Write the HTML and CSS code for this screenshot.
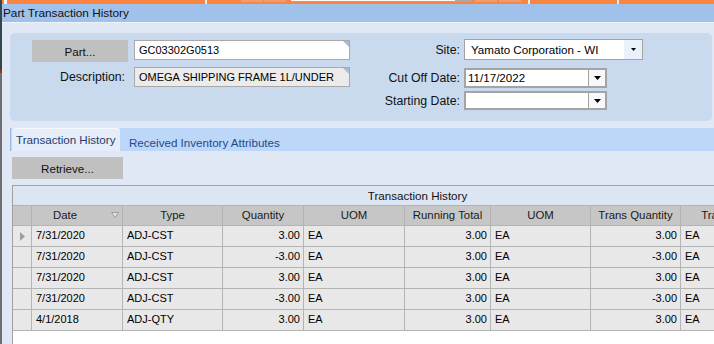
FILE: index.html
```html
<!DOCTYPE html>
<html lang="en">
<head>
    <meta charset="UTF-8">
    <meta name="viewport" content="width=device-width, initial-scale=1.0">
    <title>Part Transaction History</title>
    <link rel="stylesheet" href="styles.css">
</head>
<body>
    <div class="edge"></div>
    <div class="window">
        <!-- strip of the window behind -->
        <div class="taskstrip">
            <span class="ts ts-gap2"></span>
            <span class="ts ts-mark"></span>
            <span class="ts ts-gap198"></span>
            <span class="ts ts-sep"></span>
            <span class="ts ts-gap34"></span>
            <span class="ts ts-pale"></span>
            <span class="ts ts-gap1"></span>
            <span class="ts ts-pale"></span>
            <span class="ts ts-gap5"></span>
            <span class="ts ts-field"></span>
            <span class="ts ts-grip"></span>
            <span class="ts ts-gap3"></span>
            <span class="ts ts-pale"></span>
            <span class="ts ts-gap2"></span>
            <span class="ts ts-pale"></span>
            <span class="ts ts-gap7"></span>
            <span class="ts ts-sep"></span>
            <span class="ts ts-gap87"></span>
            <span class="ts ts-sep"></span>
        </div>

        <div class="titlebar">Part Transaction History</div>

        <div class="content">
            <div class="criteria">
                <div class="crit-left">
                    <div class="crit-row">
                        <button class="btn part-btn">Part...</button>
                        <div class="field folded">GC03302G0513</div>
                    </div>
                    <div class="crit-row">
                        <label class="crit-label">Description:</label>
                        <div class="field folded readonly">OMEGA SHIPPING FRAME 1L/UNDER</div>
                    </div>
                </div>
                <div class="crit-right">
                    <div class="crit-row site-row">
                        <label class="crit-label wide">Site:</label>
                        <div class="combo site-combo">
                            <span class="combo-text">Yamato Corporation - WI</span>
                            <span class="combo-btn">
                                <svg width="5" height="3" viewBox="0 0 5 3"><polygon points="0,0 5,0 2.5,3" fill="#000"/></svg>
                            </span>
                        </div>
                    </div>
                    <div class="crit-row cutoff-row">
                        <label class="crit-label wide">Cut Off Date:</label>
                        <div class="combo date-combo">
                            <span class="combo-text">11/17/2022</span>
                            <span class="date-btn">
                                <svg width="7" height="4" viewBox="0 0 7 4"><polygon points="0,0 7,0 3.5,4" fill="#000"/></svg>
                            </span>
                        </div>
                    </div>
                    <div class="crit-row start-row">
                        <label class="crit-label wide">Starting Date:</label>
                        <div class="combo date-combo short">
                            <span class="combo-text"></span>
                            <span class="date-btn">
                                <svg width="7" height="4" viewBox="0 0 7 4"><polygon points="0,0 7,0 3.5,4" fill="#000"/></svg>
                            </span>
                        </div>
                    </div>
                </div>
            </div>

            <div class="tabs">
                <div class="tab active">Transaction History</div>
                <div class="tab">Received Inventory Attributes</div>
            </div>

            <div class="tab-body">
                <button class="btn retrieve-btn">Retrieve...</button>

                <div class="grid">
                    <div class="grid-inner">
                        <div class="grid-caption">Transaction History</div>
                        <div class="grid-row head">
                            <div class="cell sel"></div>
                            <div class="cell date-head">Date
                                <svg class="filter-icon" width="8" height="6" viewBox="0 0 8 6"><polygon points="0.5,0.5 7.5,0.5 4,5.5" fill="#e4e4e4" stroke="#9c9c9c" stroke-width="1"/></svg>
                            </div>
                            <div class="cell">Type</div>
                            <div class="cell">Quantity</div>
                            <div class="cell">UOM</div>
                            <div class="cell">Running Total</div>
                            <div class="cell">UOM</div>
                            <div class="cell">Trans Quantity</div>
                            <div class="cell">Trans UOM</div>
                            <div class="cell"></div>
                        </div>
                        <div class="grid-row">
                            <div class="cell sel">
                                <svg width="5" height="9" viewBox="0 0 5 9"><polygon points="0,0 5,4.5 0,9" fill="#9e9e9e"/></svg>
                            </div>
                            <div class="cell">7/31/2020</div>
                            <div class="cell">ADJ-CST</div>
                            <div class="cell num">3.00</div>
                            <div class="cell">EA</div>
                            <div class="cell num">3.00</div>
                            <div class="cell">EA</div>
                            <div class="cell num">3.00</div>
                            <div class="cell">EA</div>
                            <div class="cell"></div>
                        </div>
                        <div class="grid-row">
                            <div class="cell sel"></div>
                            <div class="cell">7/31/2020</div>
                            <div class="cell">ADJ-CST</div>
                            <div class="cell num">-3.00</div>
                            <div class="cell">EA</div>
                            <div class="cell num">3.00</div>
                            <div class="cell">EA</div>
                            <div class="cell num">-3.00</div>
                            <div class="cell">EA</div>
                            <div class="cell"></div>
                        </div>
                        <div class="grid-row">
                            <div class="cell sel"></div>
                            <div class="cell">7/31/2020</div>
                            <div class="cell">ADJ-CST</div>
                            <div class="cell num">3.00</div>
                            <div class="cell">EA</div>
                            <div class="cell num">3.00</div>
                            <div class="cell">EA</div>
                            <div class="cell num">3.00</div>
                            <div class="cell">EA</div>
                            <div class="cell"></div>
                        </div>
                        <div class="grid-row">
                            <div class="cell sel"></div>
                            <div class="cell">7/31/2020</div>
                            <div class="cell">ADJ-CST</div>
                            <div class="cell num">-3.00</div>
                            <div class="cell">EA</div>
                            <div class="cell num">3.00</div>
                            <div class="cell">EA</div>
                            <div class="cell num">-3.00</div>
                            <div class="cell">EA</div>
                            <div class="cell"></div>
                        </div>
                        <div class="grid-row">
                            <div class="cell sel"></div>
                            <div class="cell">4/1/2018</div>
                            <div class="cell">ADJ-QTY</div>
                            <div class="cell num">3.00</div>
                            <div class="cell">EA</div>
                            <div class="cell num">3.00</div>
                            <div class="cell">EA</div>
                            <div class="cell num">3.00</div>
                            <div class="cell">EA</div>
                            <div class="cell"></div>
                        </div>
                    </div>
                </div>
            </div>
        </div>
    </div>
</body>
</html>
```

FILE: styles.css
```css
* {
    margin: 0;
    padding: 0;
    box-sizing: border-box;
}

html, body {
    width: 714px;
    height: 344px;
    overflow: hidden;
}

body {
    font-family: "Liberation Sans", Arial, sans-serif;
    font-size: 11.6px;
    color: #000;
    background-color: #dfe8f4;
    display: flex;
}

.edge {
    width: 2px;
    flex: none;
    background: linear-gradient(#33474f 0, #33474f 70px, #8e3b2b 70px, #8e3b2b 73px, #6f6f6f 73px);
}

.window {
    flex: 1;
    min-width: 0;
    display: flex;
    flex-direction: column;
}

/* window behind */
.taskstrip {
    height: 4px;
    background-color: #fb8440;
    display: flex;
    align-items: flex-start;
    flex: none;
}

.ts {
    flex: none;
    height: 4px;
}

.ts-gap1 { width: 1px; }
.ts-gap2 { width: 2px; }
.ts-gap3 { width: 3px; }
.ts-gap5 { width: 5px; }
.ts-gap7 { width: 7px; }
.ts-gap34 { width: 34px; }
.ts-gap87 { width: 87px; }
.ts-gap198 { width: 198px; }

.ts-mark {
    width: 3px;
    background-color: #f3f3f3;
}

.ts-sep {
    width: 2px;
    background-color: #ececec;
}

.ts-pale {
    width: 22px;
    height: 2px;
    background-color: #eb9d74;
}

.ts-field {
    width: 164px;
    height: 2px;
    background-color: #fafafa;
    border-bottom: 1px solid #a4a4a4;
}

.ts-grip {
    width: 17px;
    height: 2px;
    background-color: #a8a8a8;
}

.titlebar {
    height: 19px;
    flex: none;
    background-color: #9fc1ea;
    border-bottom: 1px solid #eef3fa;
    padding-left: 1px;
    line-height: 18px;
    font-size: 11.8px;
    color: #111;
}

.content {
    flex: 1;
    min-height: 0;
    display: flex;
    flex-direction: column;
    padding: 10px 0 0 8px;
}

/* criteria panel */
.criteria {
    height: 88px;
    flex: none;
    margin-right: 2px;
    background-color: #c9daee;
    border-radius: 5px;
    display: flex;
    padding: 7px 0 0 22px;
}

.crit-left {
    width: 318px;
    display: flex;
    flex-direction: column;
    gap: 5px;
}

.crit-right {
    margin-left: 10px;
    display: flex;
    flex-direction: column;
}

.crit-row {
    display: flex;
    align-items: center;
    gap: 6px;
}

.crit-label {
    width: 96px;
    flex: none;
    text-align: right;
    padding-right: 3px;
    font-size: 12.3px;
    color: #111;
}

.crit-label.wide {
    width: 100px;
    padding-right: 0;
}

.crit-right .crit-row {
    gap: 4px;
}

.btn {
    font-family: inherit;
    font-size: 11.6px;
    color: #111;
    background-color: #c0c0c0;
    border: none;
    border-radius: 0;
    height: 22px;
}

.part-btn {
    width: 96px;
    flex: none;
}

.field {
    position: relative;
    width: 216px;
    height: 20px;
    background-color: #fff;
    border: 1px solid #a9a9a9;
    padding-left: 4px;
    line-height: 18px;
    font-size: 11px;
    white-space: nowrap;
    overflow: hidden;
    align-self: flex-start;
}

.field.readonly {
    background-color: #ebebeb;
}

.folded::after {
    content: "";
    position: absolute;
    top: 0;
    right: 0;
    border-top: 6px solid #a7bbd6;
    border-left: 6px solid transparent;
}

.combo {
    display: flex;
    background-color: #fff;
}

.combo-text {
    flex: 1;
    white-space: nowrap;
    overflow: hidden;
}

.site-row {
    margin-top: -1px;
}

.site-combo {
    width: 179px;
    height: 21px;
    border: 1px solid #a3a3a3;
    line-height: 19px;
}

.site-combo .combo-text {
    padding-left: 6px;
}

.combo-btn {
    width: 18px;
    background-color: #e9f1fb;
    display: flex;
    align-items: center;
    justify-content: center;
}

.cutoff-row {
    margin-top: 8px;
}

.start-row {
    margin-top: 3px;
}

.date-combo {
    width: 143px;
    height: 20px;
    border: 2px solid #a4a4a4;
    line-height: 16px;
}

.date-combo.short {
    height: 19px;
    line-height: 15px;
}

.date-combo .combo-text {
    padding-left: 2px;
}

.date-btn {
    width: 17px;
    border-left: 1px solid #a4a4a4;
    background-color: #f6f8fa;
    display: flex;
    align-items: center;
    justify-content: center;
}

/* tabs */
.tabs {
    margin-top: 7px;
    height: 23px;
    flex: none;
    background-color: #bdd7f8;
    border-left: 1px solid #9dbbe2;
    padding-left: 1px;
    display: flex;
}

.tab {
    color: #1c4a8e;
    padding: 8px 0 0 9px;
}

.tab.active {
    width: 108px;
    background-color: #e5edf8;
    border-top: 1px solid #f4f7fc;
    border-radius: 3px 3px 0 0;
    color: #1e3c6e;
    padding: 4px 0 0 4px;
}

.tab-body {
    flex: 1;
    min-height: 0;
    display: flex;
    flex-direction: column;
    padding: 6px 0 0 2px;
}

.retrieve-btn {
    width: 111px;
    flex: none;
}

/* grid */
.grid {
    margin-top: 6px;
    flex: 1;
    min-height: 0;
    background-color: #fff;
    border-left: 1px solid #a0a0a0;
    border-top: 1px solid #a0a0a0;
    overflow: hidden;
}

.grid-inner {
    width: 809px;
}

.grid-caption {
    height: 20px;
    background-color: #dce6f2;
    border-bottom: 1px solid #b2b2b2;
    text-align: center;
    line-height: 19px;
    color: #111;
}

.grid-row {
    display: grid;
    grid-template-columns: 19px 91px 100px 81px 101px 86px 100px 90px 100px 41px;
    height: 21px;
}

.grid-row.head {
    height: 20px;
}

.cell {
    position: relative;
    background-color: #e8e8e8;
    border-right: 1px solid #b4b4b4;
    border-bottom: 1px solid #b4b4b4;
    padding: 0 4px;
    line-height: 19px;
    font-size: 11px;
    white-space: nowrap;
    overflow: hidden;
}

.head .cell {
    background-color: #c6c6c6;
    text-align: center;
    color: #1a1a1a;
    line-height: 18px;
    font-size: 11.4px;
}

.head .date-head {
    padding-right: 28px;
}

.filter-icon {
    position: absolute;
    right: 3px;
    top: 6px;
}

.cell.sel {
    padding: 0;
    display: flex;
    align-items: center;
    justify-content: center;
}

.cell.num {
    text-align: right;
    padding-right: 3px;
}
```
